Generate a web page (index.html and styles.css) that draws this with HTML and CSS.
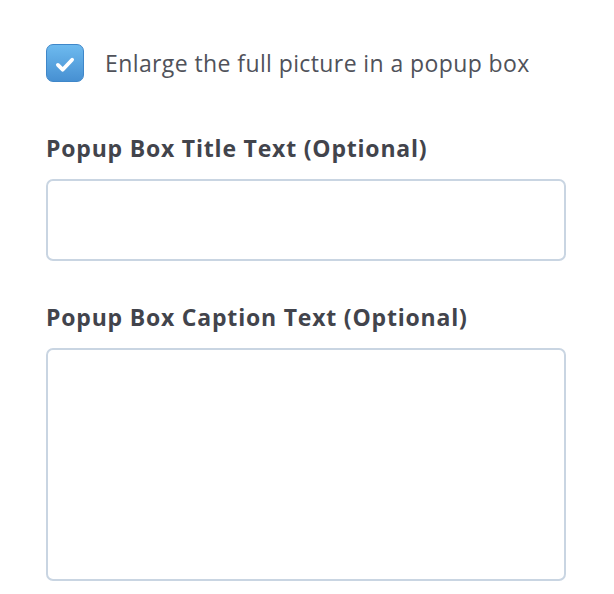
FILE: index.html
```html
<!DOCTYPE html>
<html lang="en">
  <head>
    <meta charset="UTF-8" />
    <meta name="viewport" content="width=device-width, initial-scale=1.0" />
    <title>Popup Settings</title>
    <link rel="stylesheet" href="styles.css">
  </head>
  <body>
    <div class="settings">
      <label class="check-row">
        <span class="checkbox">
          <svg viewBox="0 0 38 38" width="38" height="38">
            <path d="M11.5 20 L16.5 25 L26.5 14.5" fill="none" stroke="#fff" stroke-width="4" stroke-linecap="round" stroke-linejoin="round" />
          </svg>
        </span>
        <span class="check-text">Enlarge the full picture in a popup box</span>
      </label>

      <div class="field">
        <label class="field-label" for="popup-title">Popup Box Title Text (Optional)</label>
        <input class="text-input" id="popup-title" type="text" />
      </div>

      <div class="field">
        <label class="field-label" for="popup-caption">Popup Box Caption Text (Optional)</label>
        <textarea class="text-area" id="popup-caption"></textarea>
      </div>
    </div>
  </body>
</html>
```

FILE: styles.css
```css
body {
  margin: 0;
  background: #fff;
  font-family: "Open Sans", Lato, sans-serif;
  color: #4f5159;
}
.settings {
  width: 520px;
  padding: 44px 0 0 46px;
}
.check-row {
  display: flex;
  align-items: center;
  gap: 21px;
  cursor: pointer;
}
.checkbox {
  width: 38px;
  height: 38px;
  border-radius: 7px;
  box-sizing: border-box;
  border: 1px solid #3f87c9;
  background: linear-gradient(#6dbaef, #4790d2);
  display: flex;
}
.check-text {
  font-size: 23px;
  letter-spacing: 0.4px;
  color: #50525a;
}
.field {
  margin-top: 51px;
}
.field + .field {
  margin-top: 41px;
}
.field-label {
  display: block;
  font-size: 23px;
  font-weight: 700;
  letter-spacing: 0.8px;
  color: #42444c;
  line-height: 30px;
  margin-bottom: 16px;
}
.text-input,
.text-area {
  display: block;
  width: 520px;
  box-sizing: border-box;
  border: 2px solid #c9d5e2;
  border-radius: 7px;
  margin: 0;
  padding: 10px 14px;
  font: inherit;
  outline: none;
  resize: none;
}
.text-input {
  height: 82px;
}
.text-area {
  height: 233px;
}
```
